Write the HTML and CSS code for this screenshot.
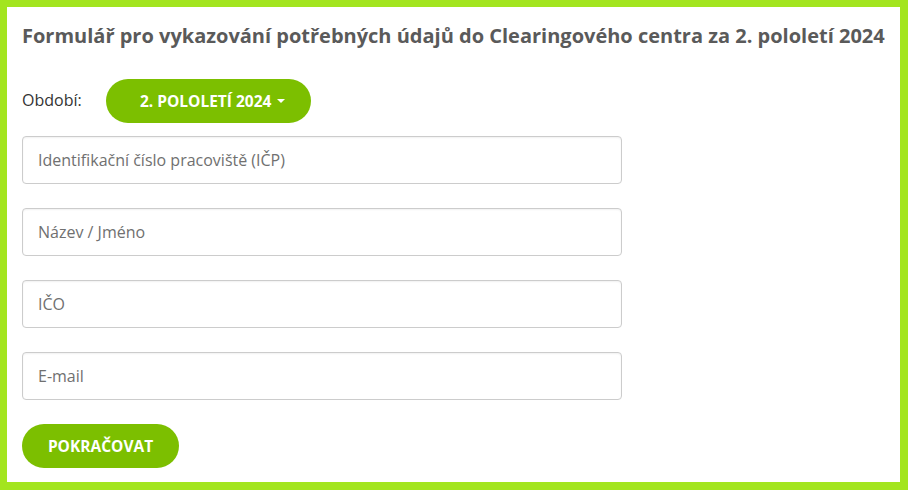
FILE: index.html
```html
<!DOCTYPE html>
<html lang="cs">
<head>
    <meta charset="UTF-8">
    <meta name="viewport" content="width=device-width, initial-scale=1.0">
    <title>Clearingové centrum</title>
    <link rel="stylesheet" href="styles.css">
</head>
<body>
    <div class="frame">
        <h1>Formulář pro vykazování potřebných údajů do Clearingového centra za 2. pololetí 2024</h1>

        <div class="period">
            <span class="period-label">Období:</span>
            <button class="btn btn-period">2. pololetí 2024 <span class="caret"></span></button>
        </div>

        <form class="form">
            <input type="text" placeholder="Identifikační číslo pracoviště (IČP)">
            <input type="text" placeholder="Název / Jméno">
            <input type="text" placeholder="IČO">
            <input type="text" placeholder="E-mail">
            <div class="actions">
                <button type="button" class="btn btn-submit">Pokračovat</button>
            </div>
        </form>
    </div>
</body>
</html>
```

FILE: styles.css
```css
* {
    box-sizing: border-box;
}

body {
    margin: 0;
    font-family: 'Open Sans', 'Noto Sans', sans-serif;
    color: #333;
    background-color: #ffffff;
}

.frame {
    width: 908px;
    height: 490px;
    border: 7px solid #a3e51f;
    border-right-width: 8px;
    border-bottom-width: 8px;
    padding: 14px 15px;
}

h1 {
    margin: 0 0 28px;
    font-size: 20px;
    font-weight: 700;
    line-height: 30px;
    color: #5a5a5a;
}

.period {
    display: flex;
    align-items: center;
    gap: 24px;
    margin-bottom: 13px;
}

.period-label {
    font-size: 16px;
    color: #333;
    margin-top: -2px;
}

.btn {
    border: none;
    border-radius: 22px;
    background-color: #7cbf00;
    color: #ffffff;
    font-family: inherit;
    font-weight: 700;
    font-size: 15.5px;
    text-transform: uppercase;
    cursor: pointer;
}

.btn-period {
    width: 205px;
    height: 44px;
    padding: 0 14px 0 23px;
    display: flex;
    align-items: center;
    justify-content: center;
    gap: 6px;
}

.caret {
    display: inline-block;
    width: 0;
    height: 0;
    border-left: 4px solid transparent;
    border-right: 4px solid transparent;
    border-top: 4px solid #ffffff;
}

.form {
    display: flex;
    flex-direction: column;
    gap: 24px;
}

.form input {
    width: 600px;
    height: 48px;
    padding: 0 15px;
    border: 1px solid #cccccc;
    border-radius: 4px;
    box-shadow: inset 0 1px 2px rgba(0, 0, 0, 0.06);
    font-family: inherit;
    font-size: 16px;
    color: #555;
}

.form input::placeholder {
    color: #707070;
}

.btn-submit {
    width: 157px;
    height: 44px;
    padding: 0;
}
```
